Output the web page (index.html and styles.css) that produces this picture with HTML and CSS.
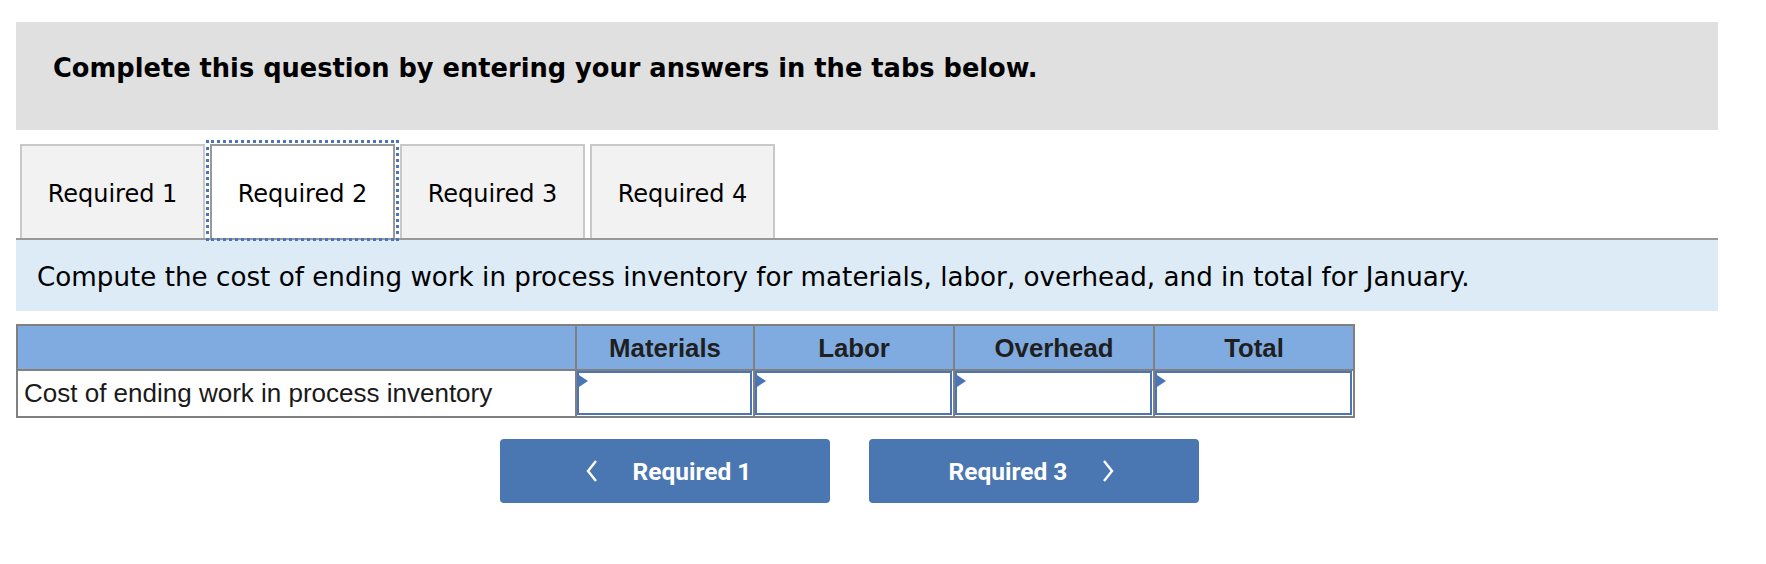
FILE: index.html
```html
<!DOCTYPE html>
<html>
<head>
<meta charset="utf-8">
<link rel="stylesheet" href="styles.css">
</head>
<body>
<div class="page">
  <div class="intro"><p class="intro-text">Complete this question by entering your answers in the tabs below.</p></div>
  <div class="tabs">
    <div class="tab">Required 1</div>
    <div class="tab active">Required 2</div>
    <div class="tab">Required 3</div>
    <div class="tab">Required 4</div>
  </div>
  <div class="prompt">Compute the cost of ending work in process inventory for materials, labor, overhead, and in total for January.</div>
  <table class="grid">
    <colgroup>
      <col class="c-label"><col class="c-mat"><col class="c-num"><col class="c-num"><col class="c-num">
    </colgroup>
    <thead>
      <tr><th></th><th>Materials</th><th>Labor</th><th>Overhead</th><th>Total</th></tr>
    </thead>
    <tbody>
      <tr>
        <td class="label">Cost of ending work in process inventory</td>
        <td class="in"><div class="box"></div></td>
        <td class="in"><div class="box"></div></td>
        <td class="in"><div class="box"></div></td>
        <td class="in"><div class="box"></div></td>
      </tr>
    </tbody>
  </table>
  <div class="nav">
    <div class="btn prev"><svg class="chev" width="14" height="24" viewBox="0 0 14 24"><polyline points="11,2 3,12 11,22" fill="none" stroke="#fff" stroke-width="2.4"/></svg><span>Required 1</span></div>
    <div class="btn next"><span>Required 3</span><svg class="chev" width="14" height="24" viewBox="0 0 14 24"><polyline points="3,2 11,12 3,22" fill="none" stroke="#fff" stroke-width="2.4"/></svg></div>
  </div>
</div>
</body>
</html>
```
FILE: styles.css
```css
* { box-sizing: border-box; }
html, body { margin: 0; padding: 0; background: #fff; }
.page { padding: 22px 0 0 16px; width: 1718px; }
.intro {
  height: 108px;
  background: #e0e0e0;
  display: flex;
  align-items: center;
  padding: 0 0 16px 37px;
}
.intro-text {
  margin: 0;
  font-family: "DejaVu Sans", Verdana, sans-serif;
  font-weight: bold;
  font-size: 25.7px;
  color: #000;
}
.tabs {
  margin-top: 14px;
  display: flex;
  gap: 5px;
  padding-left: 4px;
  border-bottom: 2px solid #999;
}
.tab {
  width: 185px;
  height: 94px;
  background: #f2f2f2;
  border: 2px solid #c8c8c8;
  border-bottom: none;
  display: flex;
  align-items: center;
  justify-content: center;
  padding-top: 3px;
  font-family: "DejaVu Sans", Verdana, sans-serif;
  font-size: 24px;
  color: #000;
  position: relative;
}
.tab.active {
  background: #fff;
  border-color: #999;
}
.tab.active::after {
  content: "";
  position: absolute;
  left: -6px;
  right: -6px;
  top: -6px;
  bottom: -3px;
  border: 3px dotted #4a76b8;
}
.prompt {
  height: 71px;
  background: #ddebf7;
  display: flex;
  align-items: center;
  padding: 3px 0 0 21px;
  font-family: "DejaVu Sans", Verdana, sans-serif;
  font-size: 26.2px;
  color: #000;
}
.grid {
  margin-top: 13px;
  border-collapse: collapse;
  width: 1337px;
  table-layout: fixed;
  font-family: "Liberation Sans", Arial, sans-serif;
  color: #1a1a1a;
}
.c-label { width: 559px; }
.c-mat { width: 178px; }
.c-num { width: 200px; }
.grid th, .grid td { border: 2px solid #808080; padding: 0; }
.grid th {
  background: #80abe0;
  height: 45px;
  padding-top: 2px;
  font-size: 25.8px;
  font-weight: bold;
  text-align: center;
  color: #1f1f1f;
}
.grid td { height: 47px; }
.grid td.label { font-size: 26px; padding-left: 6px; text-align: left; }
.grid td.in { padding: 0 1px 1px 0; }
.box {
  height: 44px;
  border: 2px solid #4a76b8;
  background: #fff;
  position: relative;
}
.box::before {
  content: "";
  position: absolute;
  left: 0;
  top: 2px;
  border-left: 9px solid #4a76b8;
  border-top: 6px solid transparent;
  border-bottom: 6px solid transparent;
}
.nav {
  margin-top: 21px;
  display: flex;
  gap: 39px;
  padding-left: 484px;
}
.btn {
  width: 330px;
  height: 64px;
  background: #4a76b2;
  border-radius: 4px;
  display: flex;
  align-items: center;
  justify-content: center;
  gap: 34px;
  color: #fff;
  font-family: Roboto, "Liberation Sans", sans-serif;
  font-weight: bold;
  font-size: 24.5px;
}
.btn.prev { padding-left: 6px; }
.btn.next { padding-right: 4px; }
.chev { display: block; }
```
